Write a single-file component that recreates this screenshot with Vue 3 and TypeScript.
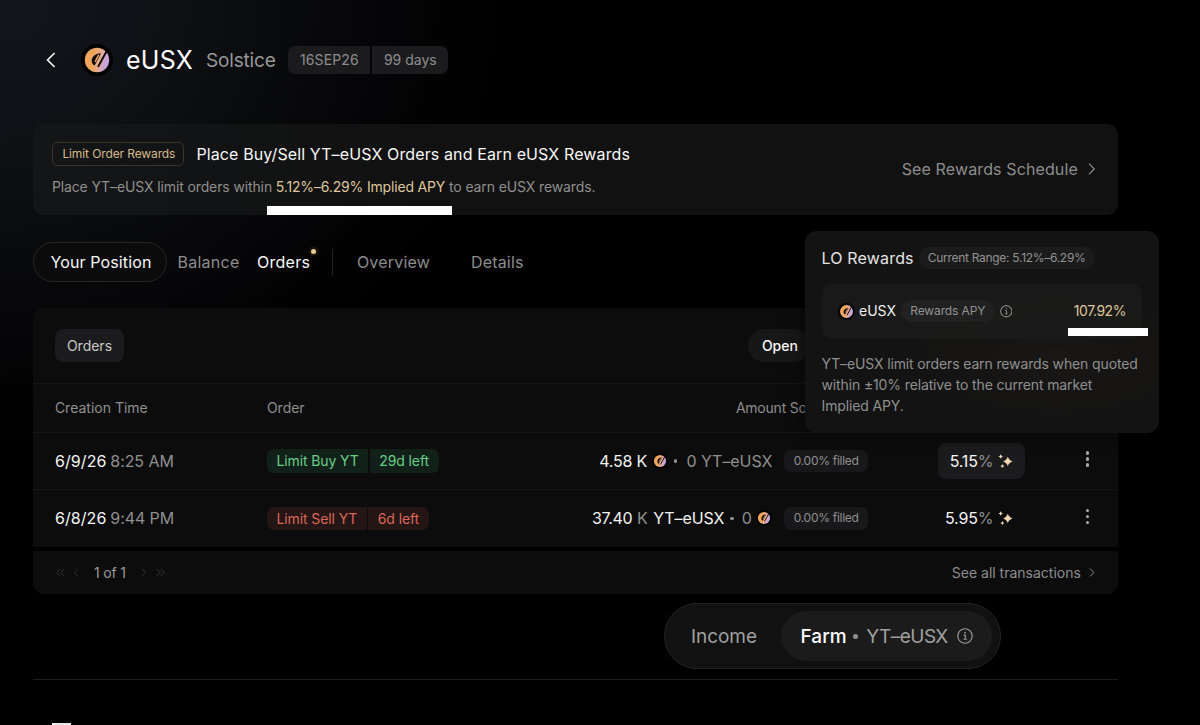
<script setup lang="ts">
import { defineComponent, h } from 'vue'

interface Order {
  date: string
  time: string
  side: 'buy' | 'sell'
  label: string
  left: string
  apy: string
  active: boolean
}

const orders: Order[] = [
  { date: '6/9/26', time: '8:25 AM', side: 'buy', label: 'Limit Buy YT', left: '29d left', apy: '5.15', active: true },
  { date: '6/8/26', time: '9:44 PM', side: 'sell', label: 'Limit Sell YT', left: '6d left', apy: '5.95', active: false },
]

let uid = 0
const TokenIcon = defineComponent({
  setup() {
    const id = `token-${uid++}`
    return () =>
      h('svg', { viewBox: '0 0 32 32', fill: 'none' }, [
        h('defs', [
          h('linearGradient', { id, x1: '4', y1: '14', x2: '28', y2: '19', gradientUnits: 'userSpaceOnUse' }, [
            h('stop', { offset: '0.35', 'stop-color': '#f0a55c' }),
            h('stop', { offset: '0.65', 'stop-color': '#e3ab9c' }),
            h('stop', { offset: '0.85', 'stop-color': '#c9a3dc' }),
          ]),
        ]),
        h('circle', { cx: 16, cy: 16, r: 16, fill: '#020202' }),
        h('circle', { cx: 16, cy: 16, r: 12.2, fill: `url(#${id})` }),
        h('path', {
          d: 'M11 18.6C9.9 14.6 12.6 9.8 19 9.2C19.6 9.2 19.8 9.7 19.5 10.2L13.6 21.4C12.4 21 11.4 20 11 18.6Z',
          fill: '#070505',
        }),
        h('path', { d: 'M14.3 17.4L17.6 11.2', stroke: '#f0a55c', 'stroke-width': '1.5', 'stroke-linecap': 'round' }),
        h('path', { d: 'M25.6 7.2L17.4 22.2', stroke: '#070505', 'stroke-width': '1.8', 'stroke-linecap': 'round' }),
      ])
  },
})
</script>

<template>
  <div class="page">
    <header class="head">
      <svg class="back" viewBox="0 0 10 16" fill="none"><path d="M8.6 1L1.6 8l7 7" stroke="#f2f2f2" stroke-width="1.7" /></svg>
      <TokenIcon class="logo" />
      <h1>eUSX</h1>
      <span class="protocol">Solstice</span>
      <div class="term"><span>16SEP26</span><span>99 days</span></div>
    </header>

    <section class="banner">
      <div class="copy">
        <div class="line1">
          <span class="tag">Limit Order Rewards</span>
          <strong>Place Buy/Sell YT–eUSX Orders and Earn eUSX Rewards</strong>
        </div>
        <p>Place YT–eUSX limit orders within <em>5.12%–6.29% Implied APY</em> to earn eUSX rewards.</p>
      </div>
      <div class="schedule">
        <span>See Rewards Schedule</span>
        <svg viewBox="0 0 8 12" fill="none"><path d="M1 .7L6.3 6 1 11.3" stroke="#8d8d8d" stroke-width="1.2" /></svg>
      </div>
      <i class="mark mark-range"></i>
    </section>

    <nav class="tabs">
      <span class="tab pill">Your Position</span>
      <span class="tab balance">Balance</span>
      <span class="tab orders">Orders<i></i></span>
      <span class="divider"></span>
      <span class="tab overview">Overview</span>
      <span class="tab">Details</span>
    </nav>

    <section class="card">
      <div class="toolbar">
        <span class="chip">Orders</span>
        <span class="open">Open</span>
      </div>
      <div class="row th">
        <span>Creation Time</span>
        <span>Order</span>
        <span class="sold">Amount Sold</span>
      </div>
      <div v-for="o in orders" :key="o.date" class="row">
        <span class="when"><b>{{ o.date }}</b> {{ o.time }}</span>
        <div class="side" :class="o.side"><span>{{ o.label }}</span><span>{{ o.left }}</span></div>
        <div class="amount">
          <template v-if="o.side === 'buy'">
            <b class="value">4.58 K</b><TokenIcon class="coin" /><i class="dot"></i><span>0 YT–eUSX</span>
          </template>
          <template v-else>
            <b class="qty">37.40</b><span class="unit">K</span><b class="name">YT–eUSX</b><i class="dot near"></i><span>0</span><TokenIcon class="coin last" />
          </template>
          <span class="filled">0.00% filled</span>
        </div>
        <div class="apy">
          <div class="rate" :class="{ active: o.active }">
            <b>{{ o.apy }}</b><span>%</span>
            <svg viewBox="0 0 15 14">
              <path d="M9.8 2.6Q10.8 6.4 14.6 7.4Q10.8 8.4 9.8 12.2Q8.8 8.4 5 7.4Q8.8 6.4 9.8 2.6Z" />
              <path d="M2.7.2Q3.2 2 5 2.5Q3.2 3 2.7 4.8Q2.2 3 .4 2.5Q2.2 2 2.7.2Z" />
              <path d="M4.4 9.9Q4.9 11.6 6.5 12Q4.9 12.4 4.4 14Q3.9 12.4 2.3 12Q3.9 11.6 4.4 9.9Z" />
            </svg>
          </div>
        </div>
        <div class="menu"><i></i><i></i><i></i></div>
      </div>
    </section>

    <footer class="pager">
      <div class="pages">
        <svg class="dbl" viewBox="0 0 9 9" fill="none"><path d="M4.3.8L.8 4.5l3.5 3.7M8.3.8L4.8 4.5l3.5 3.7" /></svg>
        <svg class="sgl" viewBox="0 0 6 9" fill="none"><path d="M5 .8L1.3 4.5 5 8.2" /></svg>
        <span>1 of 1</span>
        <svg class="sgl" viewBox="0 0 6 9" fill="none"><path d="M1 .8l3.7 3.7L1 8.2" /></svg>
        <svg class="dbl" viewBox="0 0 9 9" fill="none"><path d="M.7.8l3.5 3.7L.7 8.2M4.7.8l3.5 3.7-3.5 3.7" /></svg>
      </div>
      <div class="all">
        <span>See all transactions</span>
        <svg viewBox="0 0 6 9" fill="none"><path d="M1 .6l3.9 3.9L1 8.4" stroke="#8d8d8d" /></svg>
      </div>
    </footer>

    <div class="switch">
      <span class="income">Income</span>
      <div class="farm">
        <b>Farm</b><i></i><span>YT–eUSX</span>
        <svg viewBox="0 0 16 16" fill="none"><circle cx="8" cy="8" r="7.2" stroke="#a0a0a0" stroke-width="1.1" /><path d="M6.7 7.1h1.6v4.2M6.6 11.3h3.2" stroke="#a0a0a0" stroke-width="1.1" /><circle cx="8" cy="4.6" r=".9" fill="#a0a0a0" /></svg>
      </div>
    </div>
    <hr />
    <div class="peek"></div>

    <aside class="popup">
      <div class="ptitle"><span>LO Rewards</span><span class="range">Current Range: 5.12%–6.29%</span></div>
      <div class="reward">
        <TokenIcon class="ricon" />
        <span class="rname">eUSX</span>
        <span class="rtag">Rewards APY</span>
        <svg class="info" viewBox="0 0 16 16" fill="none"><circle cx="8" cy="8" r="7.2" stroke="#8b8b8b" stroke-width="1.3" /><path d="M6.7 7.1h1.6v4.2M6.6 11.3h3.2" stroke="#8b8b8b" stroke-width="1.2" /><circle cx="8" cy="4.6" r=".9" fill="#8b8b8b" /></svg>
        <span class="rval">107.92%</span>
      </div>
      <p>YT–eUSX limit orders earn rewards when quoted<br />within ±10% relative to the current market<br />Implied APY.</p>
      <i class="mark mark-apy"></i>
    </aside>
  </div>
</template>

<style>
html, body { background: #000; overflow: hidden; }
</style>

<style scoped>
* { box-sizing: border-box; }
.page {
  position: relative;
  width: 1200px;
  height: 725px;
  overflow: hidden;
  display: flex;
  flex-direction: column;
  align-items: flex-start;
  padding-left: 33.4px;
  font: 400 14px/1 Inter, sans-serif;
  color: #8f8f8f;
  white-space: nowrap;
  background: radial-gradient(ellipse 500px 440px at 0 0, #14151a 0%, #0f1014 35%, #060608 72%, #000 100%) #000;
}
b { font-weight: 400; color: #f5f5f5; }
svg { display: block; flex: none; }

.head { display: flex; align-items: center; height: 32px; margin-top: 44px; padding-left: 13px; }
.back { width: 10px; height: 16px; }
.logo { width: 32px; height: 32px; margin-left: 24.5px; }
h1 { margin: 0 0 0 13px; width: 80px; font: 400 25px/32px Inter, sans-serif; letter-spacing: .32px; color: #fff; }
.protocol { width: 82px; font-size: 19px; letter-spacing: -.14px; color: #989898; }
.term { display: flex; gap: 2px; font-size: 14px; color: #8d8d8f; }
.term span { height: 28px; line-height: 28px; background: #1b1b1d; padding-left: 12px; }
.term span:first-child { width: 82px; border-radius: 7px 0 0 7px; letter-spacing: .15px; }
.term span:last-child { width: 76px; border-radius: 0 7px 7px 0; letter-spacing: 0; }

.banner {
  position: relative; display: flex; justify-content: space-between; align-items: center;
  width: 1084.5px; height: 91.5px; margin-top: 48px; padding: 0 22px 2px 18.5px; border-radius: 11px;
  background: linear-gradient(90deg, #141517, #111 35%);
}
.line1 { display: flex; align-items: center; gap: 12px; }
.tag {
  width: 132.5px; height: 24px; padding-left: 9.5px; line-height: 22px; border: 1px solid #3a342a; border-radius: 5px;
  font-size: 12px; letter-spacing: -.11px; color: #d6ba8c;
}
strong { font-weight: 400; font-size: 16px; letter-spacing: .12px; color: #f7f7f7; }
.copy p { margin: 12px 0 0; line-height: 18px; letter-spacing: -.12px; }
em { font-style: normal; letter-spacing: -.17px; color: #dfc69c; }
.schedule { display: flex; align-items: center; gap: 10px; font-size: 16px; letter-spacing: .12px; color: #8d8d8d; }
.schedule svg { width: 8px; height: 12px; }
.mark { position: absolute; background: #fff; }
.mark-range { left: 234px; top: 82px; width: 184.5px; height: 8.5px; }

.tabs { display: flex; align-items: center; height: 40px; margin-top: 26.5px; font-size: 16px; letter-spacing: .2px; color: #8d8d8d; }
.pill {
  width: 134px; height: 40px; margin-right: 10px; padding-left: 16px; line-height: 38px;
  border: 1px solid #262626; border-radius: 20px; background: #0b0b0c; color: #f7f7f7; letter-spacing: .13px;
}
.balance { width: 79.5px; letter-spacing: .29px; }
.orders { position: relative; width: 75.5px; color: #fafafa; letter-spacing: .28px; }
.orders i {
  position: absolute; left: 54px; top: -5px; width: 5px; height: 5px; border-radius: 50%;
  background: #e9cb97; box-shadow: 0 0 0 2.5px #1a140c;
}
.divider { width: 1px; height: 26px; margin-right: 23.5px; background: #232323; }
.overview { width: 114px; }

.card { width: 1084.5px; height: 239px; margin-top: 26px; border-radius: 11px 11px 0 0; background: #0c0c0c; }
.toolbar { display: flex; justify-content: space-between; padding: 21px 308px 0 21.5px; height: 75.5px; }
.chip { width: 69px; height: 33px; padding-left: 12px; line-height: 33px; border-radius: 8px; background: #1b1b1d; color: #c8c8c8; }
.open { width: 62px; height: 33px; padding-left: 14px; line-height: 33px; border-radius: 17px; background: #171717; color: #fafafa; font-weight: 500; }
.row {
  display: grid; grid-template-columns: 212px 234px 367px 178px 1fr; align-items: center; width: 100%; height: 57.5px;
  padding-left: 21.5px; border-top: 1px solid #161616;
}
.th { height: 48.5px; }
.sold { padding-left: 235px; letter-spacing: -.22px; }
.when { font-size: 16px; letter-spacing: -.08px; }
.when b { letter-spacing: .09px; margin-right: -.6px; }
.side { display: flex; gap: 1.5px; letter-spacing: -.1px; }
.side span { height: 23.5px; line-height: 23.5px; padding: 0 9.5px; }
.side span:first-child { border-radius: 7px 0 0 7px; }
.side span:last-child { border-radius: 0 7px 7px 0; }
.buy span { background: #11211a; color: #68cf86; }
.sell span { background: #241614; color: #dd6558; }
.amount { display: flex; justify-content: flex-end; align-items: center; font-size: 16px; letter-spacing: -.05px; }
.amount b { color: #f2f2f2; }
.coin { width: 16px; height: 16px; }
.value { margin-right: 5px; letter-spacing: -.21px; }
.dot { width: 3.5px; height: 3.5px; margin: 0 9px 0 6px; border-radius: 50%; background: #8f8f8f; }
.near { margin: 0 8px 0 6px; }
.qty { letter-spacing: -.4px; margin-right: 5px; }
.unit { margin-right: 5.5px; }
.name { letter-spacing: -.1px; }
.last { margin-left: 4.5px; }
.filled {
  width: 83.5px; height: 22.5px; margin-left: 12px; line-height: 22.5px; text-align: center; border-radius: 7px;
  background: #18181a; font-size: 12px; letter-spacing: -.29px;
}
.apy { display: flex; justify-content: flex-end; padding-right: 20.5px; }
.rate { display: flex; align-items: center; height: 36px; padding: 0 12px; border-radius: 8px; font-size: 16px; }
.rate b { letter-spacing: -.2px; }
.rate svg { width: 15px; height: 14px; margin-left: 5px; fill: #f1d6b2; }
.active { background: #1b1b1d; }
.menu { display: flex; flex-direction: column; align-items: center; gap: 2.7px; width: 5px; margin: -4px 0 0 39px; }
.menu i { width: 3.4px; height: 3.4px; border-radius: 50%; background: #aaa; }

.pager {
  display: flex; justify-content: space-between; align-items: center; width: 1084.5px; height: 42.5px; margin-top: 4.6px;
  padding: 0 23px 0 22.5px; border-radius: 0 0 11px 11px; background: #0c0c0c; color: #9a9a9a;
}
.pages { display: flex; align-items: center; }
.pages svg { stroke: #363636; }
.pages span { width: 47px; margin-left: 15px; letter-spacing: -.17px; }
.dbl { width: 9px; height: 9px; }
.sgl { width: 6px; height: 9px; margin-left: 8px; }
.pages span + .sgl { margin: 0 9px 0 0; }
.all { display: flex; align-items: center; gap: 8px; color: #8d8d8d; }
.all svg { width: 6px; height: 9px; }

.switch {
  display: flex; align-items: center; width: 336.5px; height: 66px; margin: 9.5px 0 0 631px; padding: 0 8px 0 25.5px;
  border: 1px solid #242424; border-radius: 33px; background: #111; font-size: 19px;
}
.income { width: 90px; color: #a0a0a0; letter-spacing: -.03px; }
.farm { display: flex; align-items: center; width: 211px; height: 50px; padding-left: 19.5px; border-radius: 25px; background: #1b1b1b; color: #a0a0a0; }
.farm b { font-weight: 500; letter-spacing: .1px; color: #fff; }
.farm i { width: 5px; height: 5px; margin: 0 8px 0 6.5px; border-radius: 50%; background: #8f8f8f; }
.farm span { letter-spacing: -.54px; }
.farm svg { width: 16px; height: 16px; margin-left: 9px; }
hr { width: 1084.5px; height: 1px; margin: 9.5px 0 0; border: 0; background: #1b1b1b; }
.peek { width: 19px; height: 2px; margin: 43.5px 0 0 18.5px; background: #e8e8e8; }

.popup {
  position: absolute; left: 805px; top: 231.4px; width: 353.5px; height: 202px; padding: 15.5px 16.5px;
  border-radius: 12px; background: radial-gradient(ellipse 150px 65px at 250px 125px, #1a1715, #131313);
  box-shadow: 0 0 18px rgba(0, 0, 0, .5);
}
.ptitle { display: flex; align-items: center; gap: 5px; font-size: 16px; letter-spacing: .17px; color: #e4e4e4; }
.range { height: 22px; padding: 0 9px; line-height: 22px; border-radius: 11px; background: #1b1b1b; font-size: 12px; letter-spacing: -.29px; color: #929292; }
.reward { display: flex; align-items: center; height: 55px; margin-top: 15px; padding: 0 16px; border-radius: 10px; background: rgba(27, 27, 27, .85); }
.ricon { width: 17px; height: 17px; }
.rname { margin: 0 5.5px 0 4.5px; color: #eee; }
.rtag { height: 22px; width: 92.5px; line-height: 22px; text-align: center; border-radius: 11px; background: #212121; font-size: 12px; letter-spacing: -.13px; color: #929292; }
.info { width: 12.5px; height: 12.5px; margin-left: 6px; }
.rval { margin-left: auto; letter-spacing: -.45px; color: #dfc69c; }
.popup p { margin: 14px 0 0; line-height: 21.3px; letter-spacing: -.13px; color: #8f8f8f; }
.mark-apy { left: 263px; top: 96.6px; width: 80px; height: 8.5px; }
</style>
